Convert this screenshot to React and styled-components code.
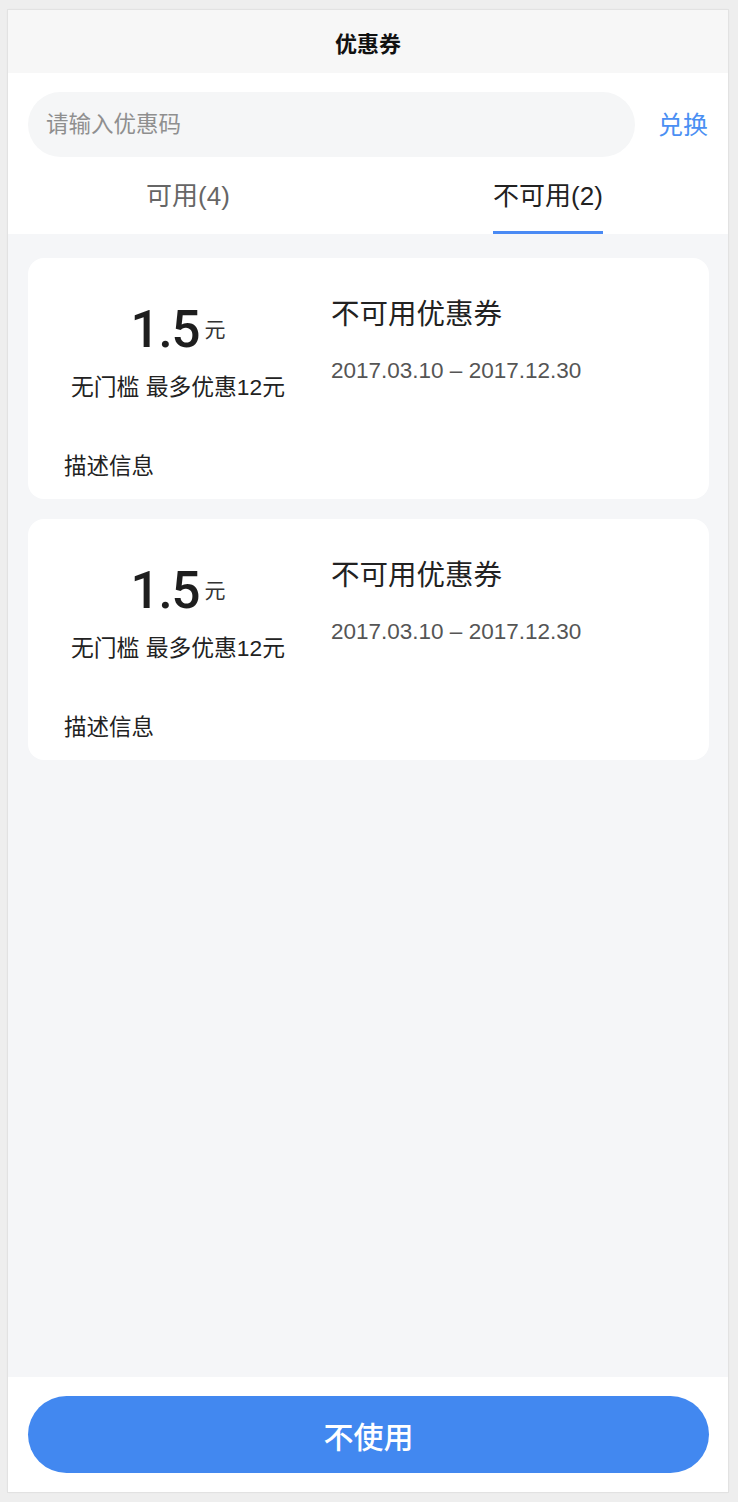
import React from "react";
import styled, { createGlobalStyle } from "styled-components";

const FONT = `"Liberation Sans", "Noto Sans CJK SC", sans-serif`;

const Global = createGlobalStyle`
  html, body { margin: 0; padding: 0; }
  body {
    background: #eeeeee;
    padding: 10px 10px 10px 8px;
    font-family: ${FONT};
    -webkit-font-smoothing: antialiased;
  }
  * { box-sizing: border-box; }
`;

const Page = styled.div`
  width: 720px;
  height: 1482px;
  display: flex;
  flex-direction: column;
  background: #ffffff;
  box-shadow: 0 0 0 1px #e2e2e2, 0 0 3px rgba(0, 0, 0, 0.06);
`;

const NavBar = styled.header`
  height: 63px;
  flex: none;
  background: #f7f7f7;
  display: flex;
  align-items: center;
  justify-content: center;
  font-size: 22px;
  font-weight: 700;
  color: #111;
`;

const TopSection = styled.section`
  background: #fff;
  flex: none;
`;

const SearchRow = styled.div`
  display: flex;
  align-items: center;
  padding: 19px 20px 0 20px;
`;

const CodeInput = styled.input`
  flex: 1;
  height: 65px;
  border: none;
  outline: none;
  border-radius: 33px;
  background: #f5f6f7;
  padding: 0 18px;
  font-family: ${FONT};
  font-size: 22.5px;
  color: #333;
  &::placeholder { color: #8f8f8f; }
`;

const Redeem = styled.button`
  border: none;
  background: none;
  padding: 0;
  margin-left: 23px;
  font-family: ${FONT};
  font-size: 25px;
  color: #4a8ff3;
  line-height: 36px;
`;

const Tabs = styled.nav`
  display: grid;
  grid-template-columns: 1fr 1fr;
`;

const Tab = styled.div`
  display: flex;
  justify-content: center;
  padding-top: 21px;
`;

const TabLabel = styled.span`
  display: inline-block;
  font-size: 26px;
  line-height: 36px;
  padding-bottom: 17px;
  color: ${(p) => (p.$active ? "#222" : "#666")};
  border-bottom: 3px solid ${(p) => (p.$active ? "#4a8af4" : "transparent")};
`;

const Content = styled.main`
  flex: 1;
  background: #f5f6f8;
  padding: 24px 19px 0 20px;
  display: flex;
  flex-direction: column;
  gap: 20px;
`;

const Card = styled.article`
  background: #fff;
  border-radius: 16px;
  height: 241px;
  padding: 36px 0 16px 0;
  display: flex;
  flex-direction: column;
`;

const CardTop = styled.div`
  display: grid;
  grid-template-columns: 300px 1fr;
`;

const ValueCol = styled.div`
  display: flex;
  flex-direction: column;
  align-items: center;
  padding-top: 6px;
`;

const Amount = styled.div`
  display: flex;
  align-items: center;
  height: 60px;
  color: #1e1e1e;
`;

const AmountNum = styled.span`
  font-family: Roboto, "Liberation Sans", sans-serif;
  font-weight: 500;
  font-size: 51px;
  line-height: 60px;
  letter-spacing: -1px;
`;

const AmountUnit = styled.span`
  font-size: 21px;
  line-height: 24px;
  margin-left: 5px;
  color: #333;
`;

const Condition = styled.div`
  margin-top: 11px;
  font-size: 22.8px;
  line-height: 32px;
  color: #222;
`;

const InfoCol = styled.div`
  padding-left: 3px;
  display: flex;
  flex-direction: column;
`;

const CouponName = styled.div`
  font-size: 28.5px;
  line-height: 40px;
  color: #222;
`;

const Period = styled.div`
  margin-top: 21px;
  font-size: 22.5px;
  line-height: 32px;
  color: #555;
`;

const Desc = styled.div`
  margin-top: auto;
  padding-left: 36px;
  font-size: 22.5px;
  line-height: 32px;
  color: #222;
`;

const Footer = styled.footer`
  flex: none;
  height: 115px;
  background: #fff;
  padding: 19px 19px 0 20px;
`;

const MainButton = styled.button`
  width: 100%;
  height: 77px;
  border: none;
  border-radius: 39px;
  background: #4288f0;
  color: #fff;
  font-family: ${FONT};
  font-size: 30px;
  font-weight: 500;
`;

const coupons = [
  { id: 1, amount: "1.5", cond: "无门槛 最多优惠12元", name: "不可用优惠券", period: "2017.03.10 – 2017.12.30", desc: "描述信息" },
  { id: 2, amount: "1.5", cond: "无门槛 最多优惠12元", name: "不可用优惠券", period: "2017.03.10 – 2017.12.30", desc: "描述信息" },
];

export default function App() {
  return (
    <>
      <Global />
      <Page>
        <NavBar>优惠券</NavBar>
        <TopSection>
          <SearchRow>
            <CodeInput placeholder="请输入优惠码" />
            <Redeem>兑换</Redeem>
          </SearchRow>
          <Tabs>
            <Tab><TabLabel>可用(4)</TabLabel></Tab>
            <Tab><TabLabel $active>不可用(2)</TabLabel></Tab>
          </Tabs>
        </TopSection>
        <Content>
          {coupons.map((c) => (
            <Card key={c.id}>
              <CardTop>
                <ValueCol>
                  <Amount>
                    <AmountNum>{c.amount}</AmountNum>
                    <AmountUnit>元</AmountUnit>
                  </Amount>
                  <Condition>{c.cond}</Condition>
                </ValueCol>
                <InfoCol>
                  <CouponName>{c.name}</CouponName>
                  <Period>{c.period}</Period>
                </InfoCol>
              </CardTop>
              <Desc>{c.desc}</Desc>
            </Card>
          ))}
        </Content>
        <Footer>
          <MainButton>不使用</MainButton>
        </Footer>
      </Page>
    </>
  );
}
